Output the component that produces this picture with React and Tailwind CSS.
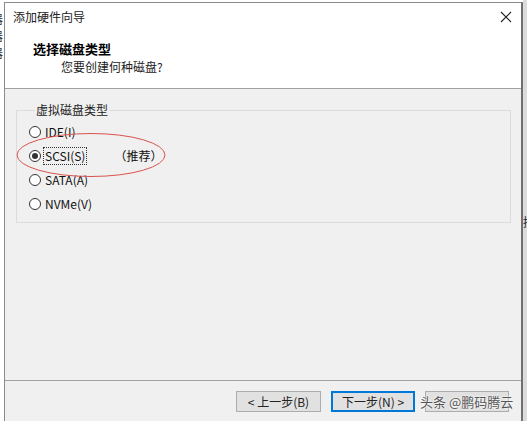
import React from "react";

const font = { fontFamily: '"Noto Sans CJK SC", "Noto Sans", sans-serif' };

function Radio({ label, checked, extra, focused }) {
  return (
    <div className="h-[24px] flex items-center">
      <span className="w-[12px] h-[12px] rounded-full border border-[#333] bg-white flex items-center justify-center">
        {checked && <span className="w-[6px] h-[6px] rounded-full bg-[#333]" />}
      </span>
      <span
        className={
          "ml-[3px] px-[1px] leading-[16px] text-[12px] text-[#111] " +
          (focused ? "outline outline-1 outline-dotted outline-[#333]" : "")
        }
      >
        {label}
      </span>
      {extra && <span className="ml-[28px] text-[12px] text-[#111]">{extra}</span>}
    </div>
  );
}

export default function App() {
  return (
    <div className="w-[527px] h-[421px] overflow-hidden bg-white flex relative" style={font}>
      {/* backdrop on the left */}
      <div className="w-[4px] overflow-hidden flex flex-col pt-[10px] text-[12px] leading-[17px] text-[#333]">
        <span className="-ml-[9px]">器</span>
        <span className="-ml-[9px]">器</span>
        <span className="-ml-[9px]">器</span>
      </div>

      {/* dialog */}
      <div className="mt-[2px] w-[519px] h-[430px] border-l border-t border-[#8a8a8a] border-r-2 border-r-[#707070] flex flex-col">
        <div className="h-[86px] bg-white border-b border-[#a0a0a0] flex flex-col">
          <div className="h-[28px] flex items-center justify-between pl-[8px] pr-[9px]">
            <span className="text-[12px] text-[#222]">添加硬件向导</span>
            <svg width="12" height="12" viewBox="0 0 12 12">
              <path d="M1 1 L11 11 M11 1 L1 11" stroke="#222" strokeWidth="1.1" />
            </svg>
          </div>
          <div className="pl-[28px] mt-[9px] text-[13px] font-bold text-black leading-[18px]">
            选择磁盘类型
          </div>
          <div className="pl-[56px] text-[12px] text-[#222] leading-[18px]">您要创建何种磁盘?</div>
        </div>

        <div className="h-[292px] bg-[#f0f0f0] pl-[11px] pr-[10px] pt-[12px] border-b border-[#a0a0a0] relative">
          <fieldset className="border border-[#dcdcdc] h-[122px] pl-[12px] pt-[1px]">
            <legend className="ml-[6px] px-[1px] text-[12px] text-[#222]">虚拟磁盘类型</legend>
            <div className="flex flex-col">
              <Radio label="IDE(I)" />
              <Radio label="SCSI(S)" checked focused extra="（推荐）" />
              <Radio label="SATA(A)" />
              <Radio label="NVMe(V)" />
            </div>
          </fieldset>
          <svg className="absolute left-0 top-0 pointer-events-none" width="200" height="120">
            <ellipse cx="86" cy="66" rx="74" ry="21.5" fill="none" stroke="#d9534f" strokeWidth="1" />
          </svg>
        </div>

        <div className="bg-[#f0f0f0] flex-1 flex justify-end pr-[12px] pt-[10px] gap-[10px]">
          <button className="w-[85px] h-[21px] bg-[#e1e1e1] border border-[#adadad] text-[12px] text-[#222] flex items-center justify-center">
            &lt; 上一步(B)
          </button>
          <button className="w-[84px] h-[21px] bg-[#e1e1e1] border-2 border-[#0078d7] text-[12px] text-[#222] flex items-center justify-center">
            下一步(N) &gt;
          </button>
          <button className="w-[84px] h-[21px] bg-[#e1e1e1] border border-[#adadad] relative">
            <span
              className="absolute -left-[6px] top-[0px] whitespace-nowrap text-[13px] text-[#555]"
              style={{ textShadow: "0 0 2px #fff, 0 0 2px #fff" }}
            >
              头条 @鹏码腾云
            </span>
          </button>
        </div>
      </div>

      {/* backdrop on the right */}
      <div className="w-[4px] bg-[#dcdcdc] overflow-hidden pt-[213px] text-[12px] text-[#222]">揣</div>
    </div>
  );
}
